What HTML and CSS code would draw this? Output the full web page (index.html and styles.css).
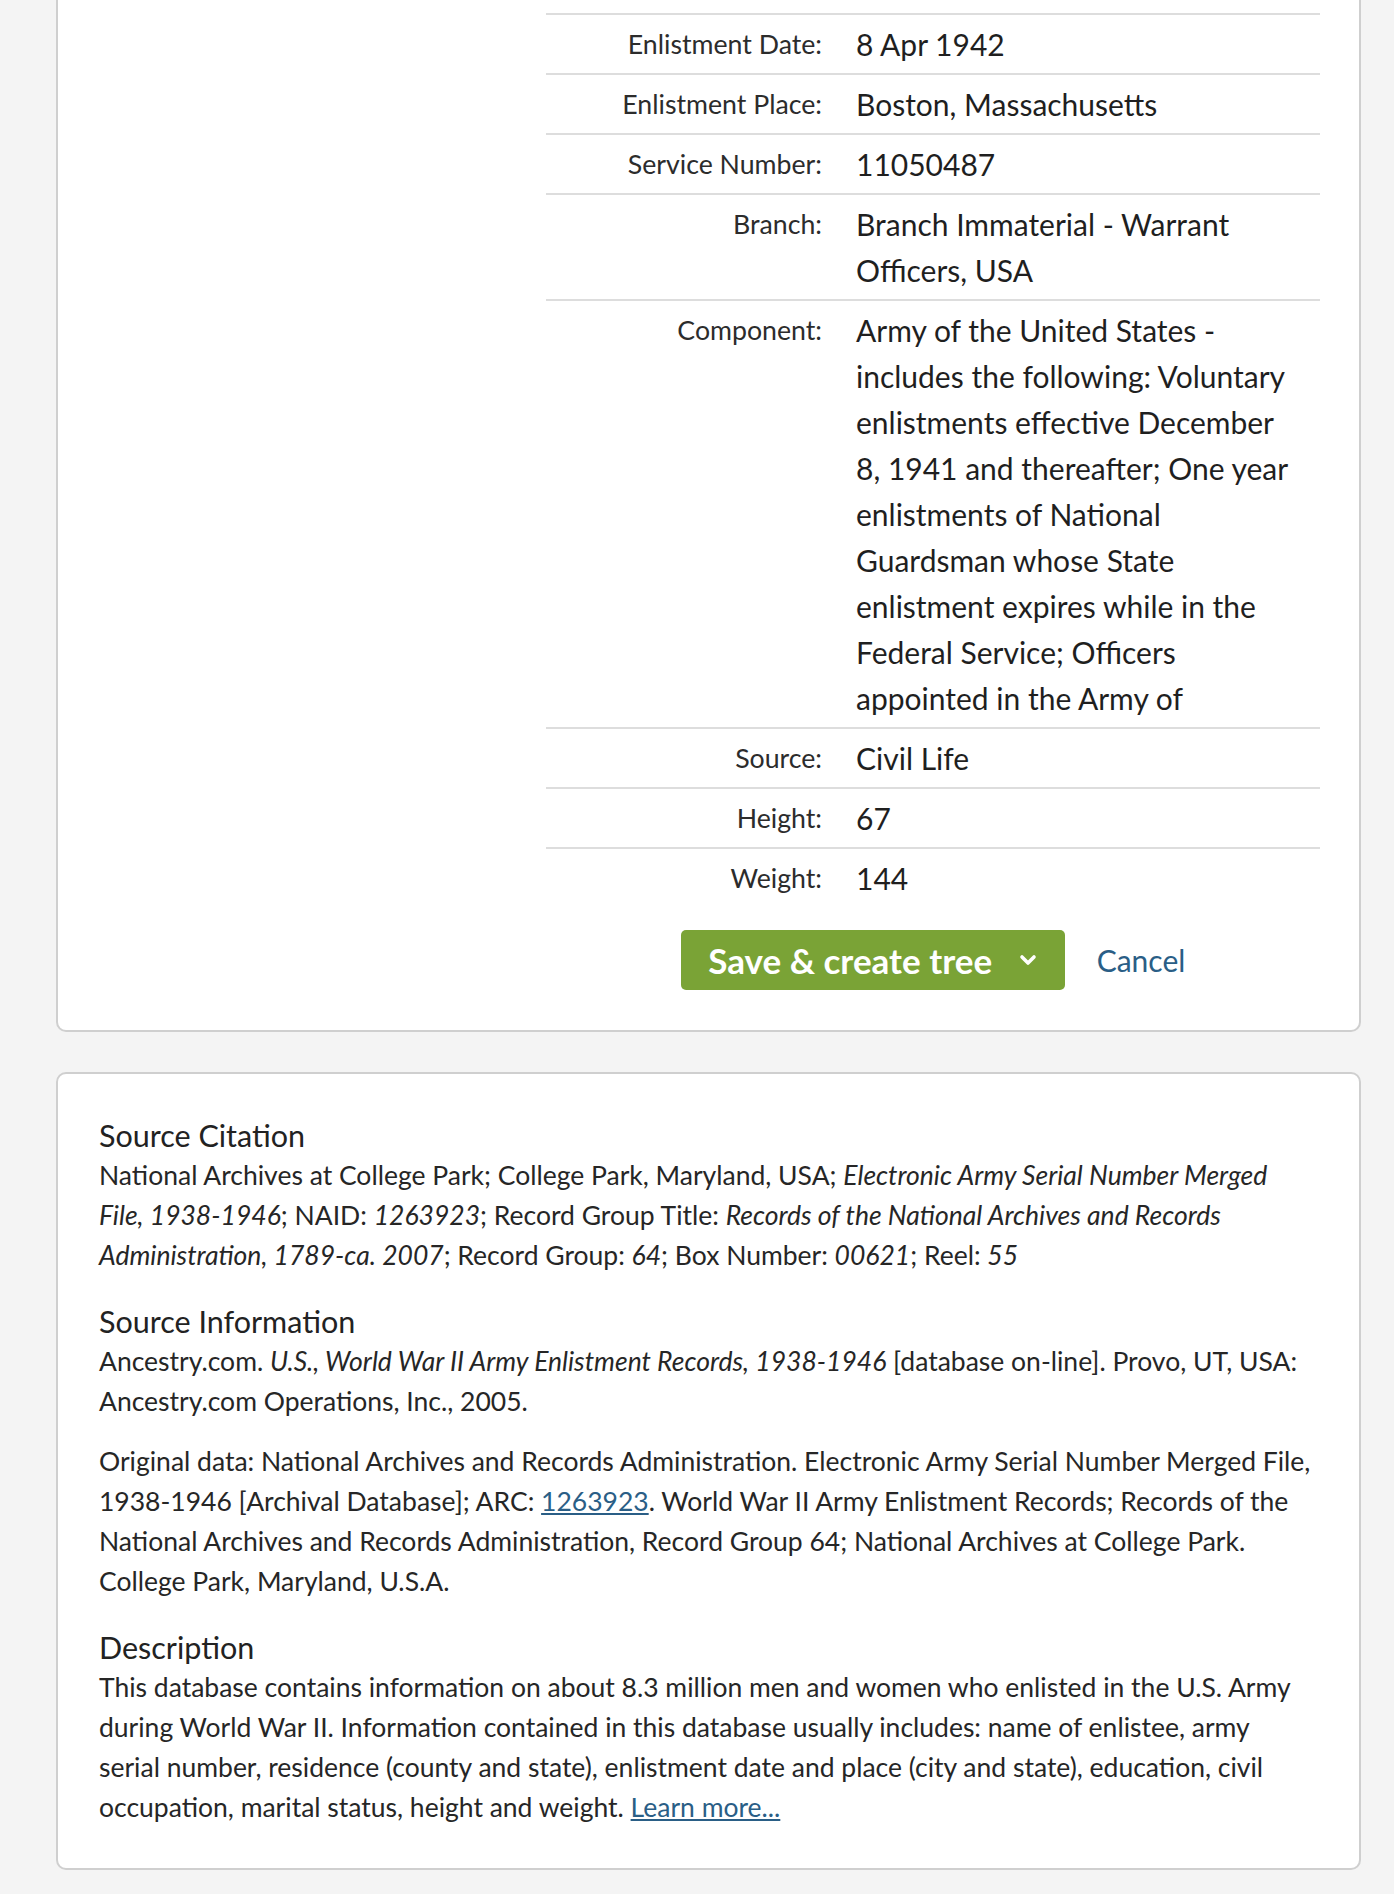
FILE: index.html
```html
<!DOCTYPE html>
<html lang="en">
<head>
<meta charset="utf-8">
<title>U.S., World War II Army Enlistment Records, 1938-1946</title>
<link rel="stylesheet" href="styles.css">
</head>
<body>
<main class="page">
  <section class="card card--cut">
    <div class="record">
      <dl class="facts">
        <div class="fact"><dt>Enlistment Date:</dt><dd>8 Apr 1942</dd></div>
        <div class="fact"><dt>Enlistment Place:</dt><dd>Boston, Massachusetts</dd></div>
        <div class="fact"><dt>Service Number:</dt><dd>11050487</dd></div>
        <div class="fact"><dt>Branch:</dt><dd>Branch Immaterial - Warrant Officers, USA</dd></div>
        <div class="fact"><dt>Component:</dt><dd>Army of the United States - includes the following: Voluntary enlistments effective December 8, 1941 and thereafter; One year enlistments of National Guardsman whose State enlistment expires while in the Federal Service; Officers appointed in the Army of</dd></div>
        <div class="fact"><dt>Source:</dt><dd>Civil Life</dd></div>
        <div class="fact"><dt>Height:</dt><dd>67</dd></div>
        <div class="fact"><dt>Weight:</dt><dd>144</dd></div>
      </dl>
      <div class="actions">
        <button class="btn-save" type="button">Save &amp; create tree
          <svg class="chev" width="18" height="12" viewBox="0 0 18 12" aria-hidden="true"><path d="M3 3 L9 9 L15 3" fill="none" stroke="#fff" stroke-width="3.6" stroke-linecap="round" stroke-linejoin="round"/></svg>
        </button>
        <a class="cancel" href="#">Cancel</a>
      </div>
    </div>
  </section>

  <section class="card source">
    <h3 class="src-title">Source Citation</h3>
    <p class="src-text">National Archives at College Park; College Park, Maryland, USA; <em>Electronic Army Serial Number Merged File, 1938-1946</em>; NAID: <em>1263923</em>; Record Group Title: <em>Records of the National Archives and Records Administration, 1789-ca. 2007</em>; Record Group: <em>64</em>; Box Number: <em>00621</em>; Reel: <em>55</em></p>

    <h3 class="src-title">Source Information</h3>
    <p class="src-text">Ancestry.com. <em>U.S., World War II Army Enlistment Records, 1938-1946</em> [database on-line]. Provo, UT, USA: Ancestry.com Operations, Inc., 2005.</p>
    <p class="src-text src-text--spaced">Original data: National Archives and Records Administration. Electronic Army Serial Number Merged File, 1938-1946 [Archival Database]; ARC: <a href="#">1263923</a>. World War II Army Enlistment Records; Records of the National Archives and Records Administration, Record Group 64; National Archives at College Park. College Park, Maryland, U.S.A.</p>

    <h3 class="src-title">Description</h3>
    <p class="src-text">This database contains information on about 8.3 million men and women who enlisted in the U.S. Army during World War II. Information contained in this database usually includes: name of enlistee, army serial number, residence (county and state), enlistment date and place (city and state), education, civil occupation, marital status, height and weight. <a href="#">Learn more...</a></p>
  </section>
</main>
</body>
</html>
```

FILE: styles.css
```css
* { box-sizing: border-box; }

html, body {
  margin: 0;
  padding: 0;
}

body {
  background: #f4f4f4;
  font-family: Lato, "Open Sans", "Liberation Sans", sans-serif;
  color: #262626;
}

.page {
  padding: 0 33px 25px 56px;
  display: flex;
  flex-direction: column;
  gap: 40px;
}

.card {
  background: #fff;
  border: 2px solid #cfcfcf;
  border-radius: 10px;
}

.card--cut {
  border-top: none;
  border-top-left-radius: 0;
  border-top-right-radius: 0;
  padding: 13px 39px 40px 0;
  display: flex;
  justify-content: flex-end;
}

.record {
  width: 774px;
}

.facts {
  margin: 0;
}

.fact {
  display: grid;
  grid-template-columns: 276px 1fr;
  column-gap: 34px;
  border-top: 2px solid #dddddd;
  padding: 6px 0;
}

.fact dt {
  text-align: right;
  font-size: 26.7px;
  line-height: 46px;
  color: #2c2c2c;
}

.fact dd {
  margin: 0;
  padding-right: 22px;
  font-size: 30px;
  line-height: 46px;
  color: #1f1f1f;
}

.actions {
  display: flex;
  justify-content: center;
  align-items: center;
  gap: 32px;
  margin-top: 23px;
}

.btn-save {
  display: flex;
  align-items: center;
  justify-content: center;
  gap: 27px;
  height: 60px;
  width: 384px;
  padding: 0 20px;
  border: none;
  border-radius: 5px;
  background: #7aa336;
  color: #fff;
  font-family: inherit;
  font-size: 35px;
  font-weight: 700;
}

.chev {
  display: block;
}

.cancel {
  font-size: 30px;
  color: #2a5e86;
  text-decoration: none;
}

.source {
  padding: 41px 46px 41px 41px;
}

.src-title {
  margin: 0;
  font-size: 30.5px;
  font-weight: 400;
  line-height: 40px;
  color: #222;
}

.src-text {
  margin: 0 0 26px;
  font-size: 26.5px;
  line-height: 40px;
  color: #262626;
}

.src-text:last-child {
  margin-bottom: 0;
}

.src-text + .src-text--spaced {
  margin-top: -6px;
}

.src-text a {
  color: #2a5e86;
  text-decoration: underline;
}
```
